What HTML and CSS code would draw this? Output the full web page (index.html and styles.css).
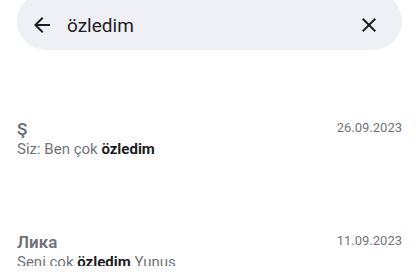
FILE: index.html
```html
<!DOCTYPE html>
<html lang="tr">
<head>
<meta charset="utf-8">
<link rel="stylesheet" href="styles.css">
</head>
<body>
<div class="page">
  <div class="search">
    <span class="icon back">
      <svg width="24" height="24" viewBox="0 0 24 24"><path d="M20 11H7.83l5.59-5.59L12 4l-8 8 8 8 1.41-1.41L7.83 13H20v-2z" fill="#1f1f1f"/></svg>
    </span>
    <span class="query">özledim</span>
    <span class="icon clear">
      <svg width="24" height="24" viewBox="0 0 24 24"><path d="M19 6.41 17.59 5 12 10.59 6.41 5 5 6.41 10.59 12 5 17.59 6.41 19 12 13.41 17.59 19 19 17.59 13.41 12z" fill="#1f1f1f"/></svg>
    </span>
  </div>
  <div class="results">
    <div class="row">
      <div class="head">
        <span class="name">Ş</span>
        <span class="date">26.09.2023</span>
      </div>
      <div class="msg">Siz: Ben çok <b>özledim</b></div>
    </div>
    <div class="row">
      <div class="head">
        <span class="name">Лика</span>
        <span class="date">11.09.2023</span>
      </div>
      <div class="msg">Seni çok <b>özledim</b> Yunus</div>
    </div>
  </div>
</div>
</body>
</html>
```
FILE: styles.css
```css
html, body {
  margin: 0;
  padding: 0;
  background: #ffffff;
  font-family: Roboto, "Noto Sans", sans-serif;
  overflow: hidden;
}
.page {
  width: 420px;
  height: 274px;
  padding: 0 18px 0 17px;
  box-sizing: border-box;
}
.search {
  margin-top: -8px;
  height: 58px;
  padding-top: 8px;
  box-sizing: border-box;
  border-radius: 29px;
  background: #eff0f5;
  display: flex;
  align-items: center;
  padding-left: 13px;
  padding-right: 21px;
}
.icon {
  display: flex;
  width: 24px;
  height: 24px;
}
.query {
  flex: 1;
  margin-left: 13px;
  font-size: 19px;
  color: #1f1f1f;
}
.results {
  padding-top: 68px;
  display: flex;
  flex-direction: column;
  gap: 73px;
}
.head {
  display: flex;
  justify-content: space-between;
  align-items: center;
  height: 22px;
}
.name {
  font-size: 17px;
  font-weight: 600;
  color: #6d7177;
  line-height: 22px;
}
.date {
  font-size: 13px;
  color: #71757b;
  line-height: 18px;
  margin-top: -2px;
}
.msg {
  font-size: 15px;
  color: #70747a;
  line-height: 18px;
}
.msg b {
  color: #1c1c1e;
  font-weight: 700;
}
```
